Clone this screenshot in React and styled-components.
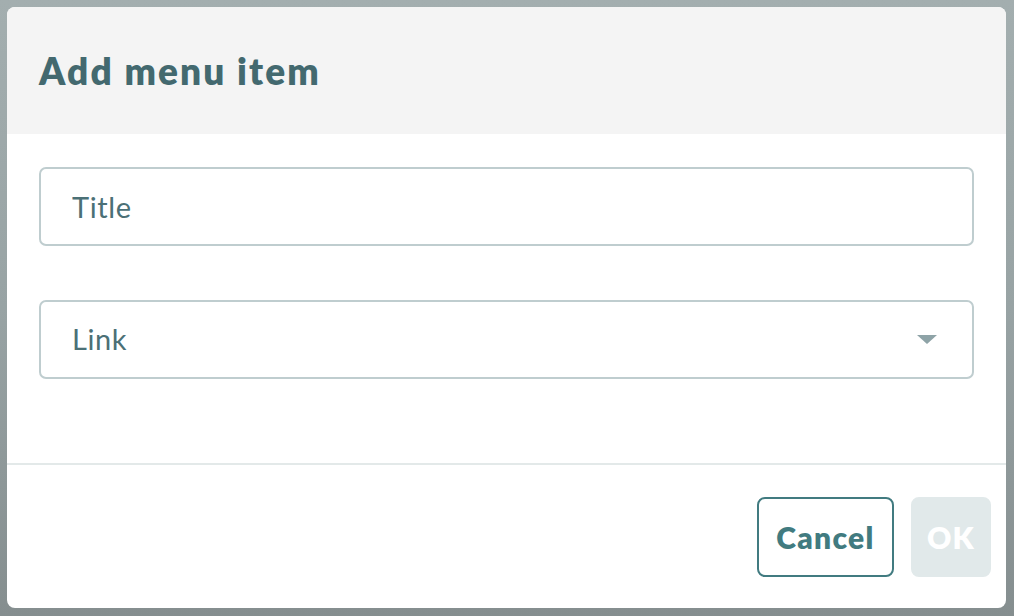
import React from "react";
import styled, { createGlobalStyle } from "styled-components";

const GlobalStyle = createGlobalStyle`
  html, body {
    margin: 0;
    padding: 0;
    height: 100%;
    font-family: Lato, "Open Sans", Arial, sans-serif;
  }
  * {
    box-sizing: border-box;
  }
`;

const Backdrop = styled.div`
  width: 1014px;
  height: 616px;
  padding: 7px 8px 8px 7px;
  background: linear-gradient(180deg, #a3aeaf 0%, #98a3a4 50%, #858e8f 100%);
  overflow: hidden;
`;

const Dialog = styled.div`
  width: 999px;
  height: 601px;
  background-color: #ffffff;
  border-radius: 8px;
  overflow: hidden;
  display: flex;
  flex-direction: column;
`;

const Header = styled.div`
  height: 127px;
  flex-shrink: 0;
  background-color: #f4f4f4;
  padding: 0 32px;
  display: flex;
  align-items: center;
`;

const Title = styled.h2`
  margin: 0;
  font-size: 37px;
  font-weight: 800;
  letter-spacing: 2.1px;
  color: #43696f;
`;

const Body = styled.div`
  flex: 1;
  padding: 33px 32px 0;
  display: flex;
  flex-direction: column;
  gap: 54px;
`;

const Field = styled.div`
  height: 79px;
  border: 2px solid #bfcdcf;
  border-radius: 7px;
  display: flex;
  align-items: center;
  padding: 0 35px 0 31px;
`;

const Input = styled.input`
  flex: 1;
  border: none;
  outline: none;
  background: transparent;
  padding: 0;
  font-family: inherit;
  font-size: 29px;
  letter-spacing: 0.6px;
  color: #43696f;

  &::placeholder {
    color: #4b7076;
    opacity: 1;
  }
`;

const SelectText = styled.span`
  flex: 1;
  font-size: 29px;
  letter-spacing: 0.6px;
  color: #4b7076;
  margin-top: -3px;
`;

const Caret = styled.span`
  width: 0;
  height: 0;
  border-left: 10px solid transparent;
  border-right: 10px solid transparent;
  border-top: 9px solid #8ea3a7;
`;

const Divider = styled.div`
  height: 2px;
  flex-shrink: 0;
  background-color: #e3e9e9;
`;

const Footer = styled.div`
  height: 143px;
  flex-shrink: 0;
  padding: 32px 15px 31px;
  display: flex;
  justify-content: flex-end;
  gap: 17px;
`;

const Button = styled.button`
  height: 80px;
  width: ${(props) => (props.primary ? "80px" : "137px")};
  padding: 0;
  border-radius: 8px;
  border: 2px solid ${(props) => (props.primary ? "#e1e9ea" : "#417b80")};
  background-color: ${(props) => (props.primary ? "#e1e9ea" : "#ffffff")};
  color: ${(props) => (props.primary ? "#ffffff" : "#417b80")};
  font-family: inherit;
  font-size: 30px;
  font-weight: 800;
  letter-spacing: 1.3px;
  cursor: ${(props) => (props.primary ? "default" : "pointer")};
`;

function App() {
  return (
    <>
      <GlobalStyle />
      <Backdrop>
        <Dialog>
          <Header>
            <Title>Add menu item</Title>
          </Header>
          <Body>
            <Field>
              <Input placeholder="Title" />
            </Field>
            <Field>
              <SelectText>Link</SelectText>
              <Caret />
            </Field>
          </Body>
          <Divider />
          <Footer>
            <Button>Cancel</Button>
            <Button primary disabled>
              OK
            </Button>
          </Footer>
        </Dialog>
      </Backdrop>
    </>
  );
}

export default App;
